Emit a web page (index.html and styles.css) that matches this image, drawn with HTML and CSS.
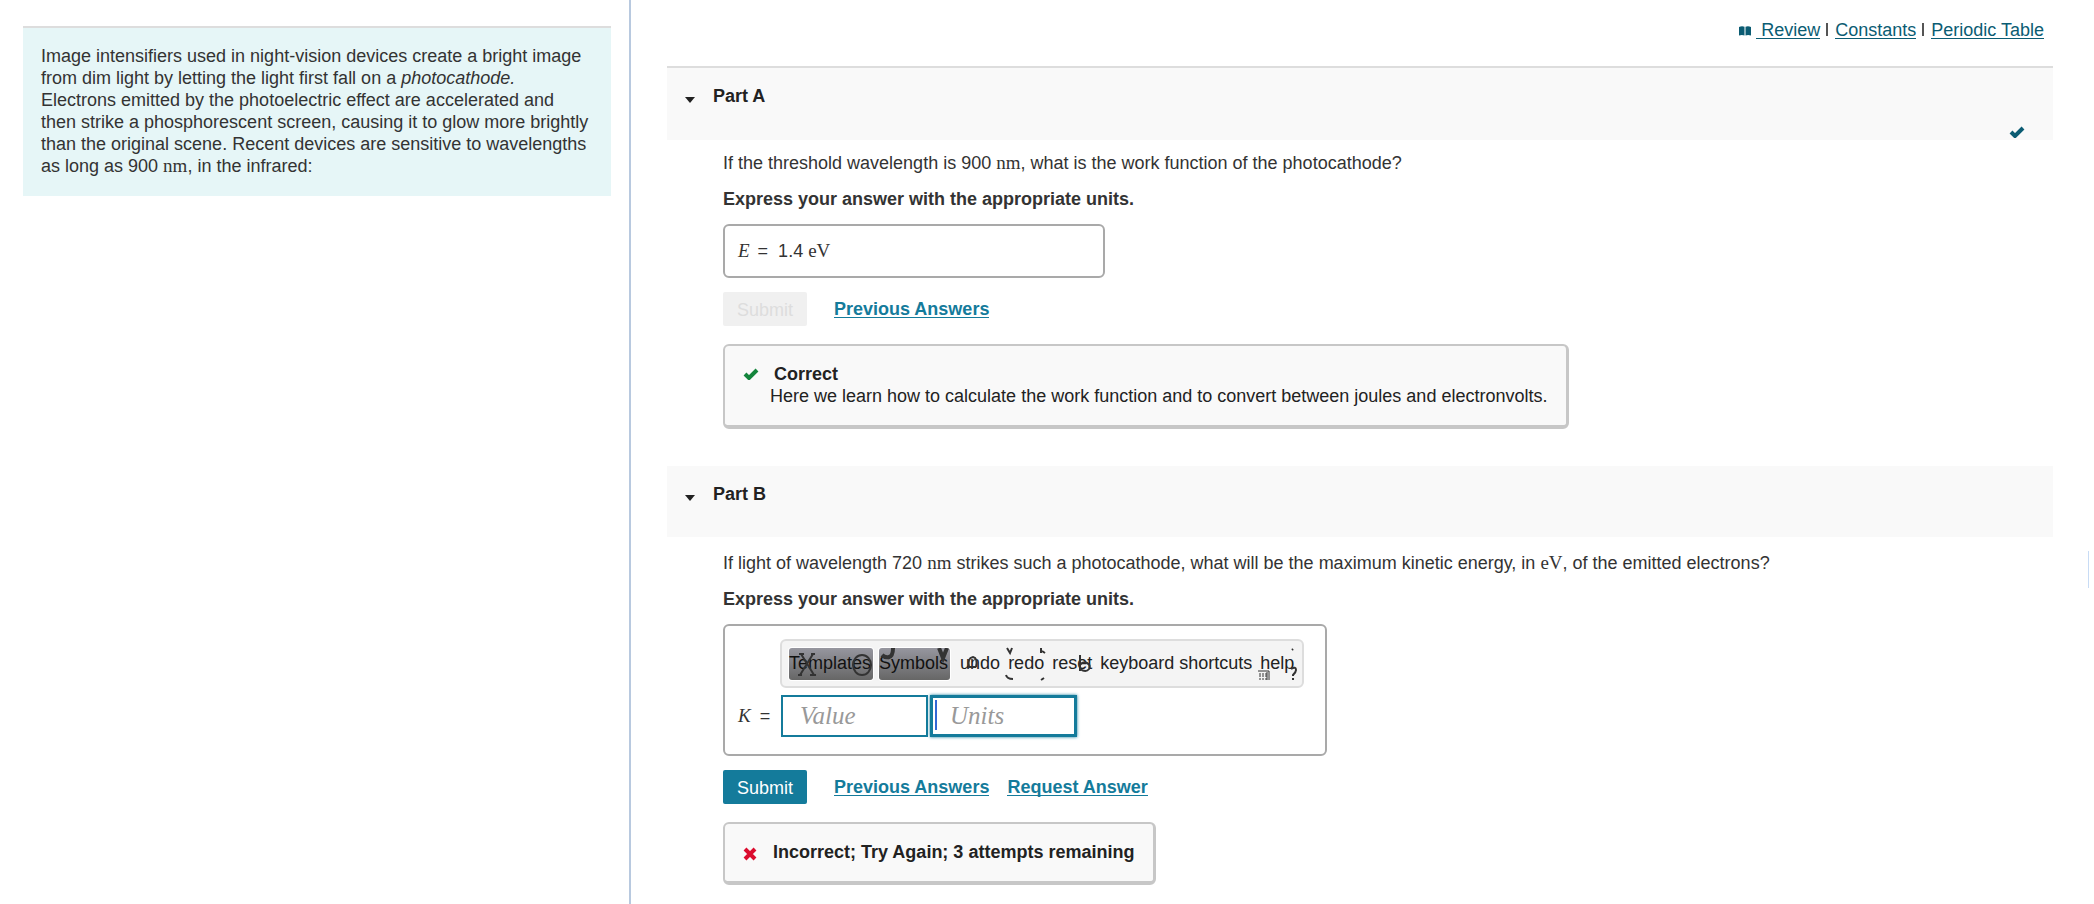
FILE: index.html
```html
<!DOCTYPE html>
<html lang="en">
<head>
  <meta charset="UTF-8" />
  <meta name="viewport" content="width=device-width, initial-scale=1.0"/>
  <title>Photocathode</title>
  <link rel="stylesheet" href="styles.css">
</head>
<body>

<aside class="sidebar">
  <div class="intro">
    Image intensifiers used in night-vision devices create a bright image from dim light by letting the light first fall on a <em>photocathode.</em> Electrons emitted by the photoelectric effect are accelerated and then strike a phosphorescent screen, causing it to glow more brightly than the original scene. Recent devices are sensitive to wavelengths as long as 900 <span class="unit">nm</span>, in the infrared:
  </div>
</aside>

<main class="content">
  <nav class="links">
    <svg class="book" viewBox="0 0 12 10" aria-hidden="true">
      <path d="M0 1Q3-.5 5.500.8V9.500Q3 8.500 0 9.500zM12 1Q9-.5 6.500.8V9.500Q9 8.500 12 9.500z"/>
    </svg>
    <a href="#review">&nbsp;Review</a>
    <span class="bar"></span>
    <a href="#constants">Constants</a>
    <span class="bar"></span>
    <a href="#periodic">Periodic Table</a>
  </nav>

  <section>
    <header class="part-header first">
      <span class="caret"></span>
      <h2>Part A</h2>
      <svg class="done" viewBox="0 0 16 12" aria-hidden="true"><path d="M2 6L6 10L14 2"/></svg>
    </header>
    <div class="part-body">
      <p class="question">If the threshold wavelength is 900 <span class="unit">nm</span>, what is the work function of the photocathode?</p>
      <p class="express">Express your answer with the appropriate units.</p>
      <div class="answer final"><span class="var">E</span> = &nbsp;1.4 <span class="unit">eV</span></div>
      <div class="actions">
        <button class="submit" disabled>Submit</button>
        <a href="#previous-a">Previous Answers</a>
      </div>
      <div class="feedback">
        <svg class="tick" viewBox="0 0 16 12" aria-hidden="true"><path d="M2 6L6 10L14 2"/></svg>
        <div>
          <h3 class="correct">Correct</h3>
          <p>Here we learn how to calculate the work function and to convert between joules and electronvolts.</p>
        </div>
      </div>
    </div>
  </section>

  <section>
    <header class="part-header">
      <span class="caret"></span>
      <h2>Part B</h2>
    </header>
    <div class="part-body current">
      <p class="question">If light of wavelength 720 <span class="unit">nm</span> strikes such a photocathode, what will be the maximum kinetic energy, in <span class="unit">eV</span>, of the emitted electrons?</p>
      <p class="express">Express your answer with the appropriate units.</p>
      <div class="answer editor">
        <div class="toolbar">
          <button class="menu">Templates
            <svg class="glyph" viewBox="0 0 84 32" aria-hidden="true"><path d="M10 6H15M22 6H26M9 27H13M21 27H27M12 6L25 27M24 6L11 27"/><ellipse cx="73" cy="17" rx="9" ry="10"/></svg>
          </button>
          <button class="menu">Symbols
            <svg class="glyph heavy" viewBox="0 0 71 32" aria-hidden="true"><path d="M14 0Q14 8 10 9Q6 10 3 7M60 0L64 10L68 0"/></svg>
          </button>
          <button class="tool undo">undo
            <svg class="glyph" viewBox="0 0 38 32" aria-hidden="true"><path d="M15 19H8Q6 10 12 9Q17 10 15 19"/></svg>
          </button>
          <button class="tool">redo
            <svg class="glyph" viewBox="0 0 36 32" aria-hidden="true"><path d="M-1 0L2 5L4 0M33 0V5M34 3L37 5M-2 27Q-1 31 5 31M33 32L36 30"/></svg>
          </button>
          <button class="tool">reset
            <svg class="glyph" viewBox="0 0 40 32" aria-hidden="true"><path d="M28 7V23M28 17Q31 13 35 15Q39 17 37 21Q34 25 28 21"/></svg>
          </button>
          <button class="tool">keyboard shortcuts</button>
          <button class="tool">help
            <svg class="glyph thin" viewBox="0 0 34 32" aria-hidden="true">
              <path d="M-2 23H9V32M7 24V32"/>
              <path class="keys" d="M-1 26H7M-1 28H7M-1 31H7"/>
              <path class="mark" d="M32 2L33 1M31 21Q36 18 36 22Q36 24 33 27V28M33 30V32"/>
            </svg>
          </button>
        </div>
        <div class="fields">
          <label for="value"><span class="var">K</span> =</label>
          <input id="value" type="text" placeholder="Value">
          <span class="units">
            <input id="units" type="text" placeholder="Units" aria-label="Units">
          </span>
        </div>
      </div>
      <div class="actions">
        <button class="submit">Submit</button>
        <a href="#previous-b">Previous Answers</a>
        <a href="#request">Request Answer</a>
      </div>
      <div class="feedback">
        <svg class="cross" viewBox="0 0 14 14" aria-hidden="true"><path d="M2 2L12 12M12 2L2 12"/></svg>
        <h3>Incorrect; Try Again; 3 attempts remaining</h3>
      </div>
    </div>
  </section>
</main>

<span class="edge"></span>

</body>
</html>
```

FILE: styles.css
```css
* {
  box-sizing: border-box;
}
body {
  margin: 0;
  display: flex;
  min-height: 100vh;
  position: relative;
  background: #fff;
  color: #333;
  font-family: "Liberation Sans", Arial, sans-serif;
  font-size: 18px;
  line-height: 22px;
}
h2, h3, p {
  margin: 0;
  font-size: 18px;
}
button, input {
  font-family: inherit;
  font-size: 18px;
}

/* left column */
.sidebar {
  width: 631px;
  flex-shrink: 0;
  padding: 26px 18px 0 23px;
  border-right: 2px solid #b8c9df;
}
.intro {
  padding: 17px 18px 19px;
  background: #e6f6f7;
  border-top: 2px solid #ddd;
}
.unit {
  font-family: "Liberation Serif", serif;
  font-size: 19px;
  line-height: 20px;
}
.var {
  font-family: "Liberation Serif", serif;
  font-size: 19px;
  line-height: 20px;
  font-style: italic;
  margin-right: 3px;
}

.content {
  flex: 1;
  padding: 19px 41px 0 36px;
}
.links {
  display: flex;
  justify-content: flex-end;
  height: 47px;
  padding-right: 9px;
}
.links a {
  height: 20px;
  border-bottom: 1px solid #0b5c73;
  color: #0b5c73;
  text-decoration: none;
}
.bar {
  width: 2px;
  height: 13px;
  margin: 4px 7px 0 6px;
  background: #555;
}
.book {
  width: 12px;
  height: 10px;
  margin: 7px 5px 0 0;
  fill: #0b5c73;
}

/* part header */
.part-header {
  display: flex;
  position: relative;
  height: 71px;
  padding: 17px 18px 0;
  background: #f9f9f9;
  color: #222;
}
.part-header.first {
  height: 74px;
  border-top: 2px solid #ddd;
}
.caret {
  margin: 12px 18px 0 0;
  width: 10px;
  height: 6px;
  background: #222;
  clip-path: polygon(0 0, 100% 0, 50% 100%);
}
.done {
  position: absolute;
  right: 28px;
  bottom: 2px;
  width: 16px;
  height: 12px;
}
.done, .tick, .cross {
  fill: none;
  stroke: #0b5c73;
  stroke-width: 4;
}
.part-body {
  padding: 12px 56px 37px;
  display: flex;
  flex-direction: column;
  align-items: flex-start;
}
.current {
  padding-top: 15px;
  padding-bottom: 16px;
}
.question {
  margin-bottom: 14px;
}
.express {
  font-weight: bold;
  margin-bottom: 14px;
}
.answer {
  border: 2px solid #a9a9a9;
  border-radius: 6px;
}
.final {
  width: 382px;
  height: 54px;
  padding: 14px 13px;
}
.actions {
  display: flex;
  gap: 18px;
  margin: 14px 0 18px;
}
.actions a {
  height: 20px;
  margin-top: 6px;
  border-bottom: 1px solid #147b9b;
  color: #147b9b;
  font-weight: bold;
  text-decoration: none;
}
.submit {
  width: 84px;
  height: 34px;
  margin-right: 9px;
  padding: 2px 0 0;
  border: 0;
  border-radius: 2px;
  background: #147b9b;
  color: #fff;
}
.submit:disabled {
  background: #f0f0f0;
  color: #ddd;
}
.feedback {
  display: flex;
  padding: 17px 19px 18px 18px;
  border: 2px solid #c7c7c7;
  border-right-width: 3px;
  border-bottom-width: 4px;
  border-radius: 6px;
  background: #f9f9f9;
  color: #222;
}
.correct {
  padding-left: 4px;
}
.tick {
  width: 16px;
  height: 12px;
  margin: 5px 11px 0 0;
  stroke: #14853c;
}
.cross {
  width: 14px;
  height: 14px;
  margin: 6px 16px 0 0;
  stroke: #db0c2e;
}

/* answer editor */
.editor {
  width: 604px;
  height: 132px;
  padding: 13px 21px 0 13px;
}
.toolbar {
  display: flex;
  align-items: center;
  height: 49px;
  margin-left: 42px;
  padding: 0 7px;
  border: 2px solid #ddd;
  border-radius: 6px;
  background: #f4f4f4;
}
.toolbar button {
  position: relative;
  height: 32px;
  padding: 0;
  border: 0;
  background: none;
  color: #222;
  white-space: nowrap;
}
.toolbar .menu {
  margin-right: 6px;
  padding: 0 2px 0 0;
  border-radius: 3px;
  background: linear-gradient(#96969f, #666);
  box-shadow: 0 0 0 1px #fff;
  color: #111;
}
.toolbar .tool {
  margin-right: 8px;
}
.toolbar .undo {
  margin-left: 4px;
}
.glyph {
  position: absolute;
  left: 0;
  top: 0;
  width: 100%;
  height: 100%;
  fill: none;
  stroke: #333;
  stroke-width: 2;
  overflow: visible;
}
.heavy {
  stroke-width: 4;
  overflow: hidden;
}
.thin {
  stroke-width: 1;
}
.keys {
  stroke-dasharray: 2 1;
}
.mark {
  stroke-width: 2;
}
.fields {
  display: flex;
  align-items: center;
  margin-top: 7px;
}
.fields label {
  width: 43px;
}
.fields label .var {
  margin-right: 4px;
}
.fields input {
  width: 147px;
  height: 42px;
  padding: 0 17px;
  border: 2px solid #147b9b;
  border-radius: 0;
  font-family: "Liberation Serif", serif;
  font-size: 25px;
  font-style: italic;
}
.fields input::placeholder {
  color: #999;
}
.units {
  position: relative;
  margin-left: 2px;
}
.units input {
  border-width: 3px;
  box-shadow: 0 0 3px #147b9b;
}
/* text cursor */
.units::before {
  content: "";
  position: absolute;
  left: 5px;
  top: 5px;
  width: 2px;
  height: 30px;
  background: #3367d6;
}
.edge {
  position: absolute;
  right: 5px;
  top: 551px;
  width: 1px;
  height: 37px;
  background: #c8dcf5;
}
```
